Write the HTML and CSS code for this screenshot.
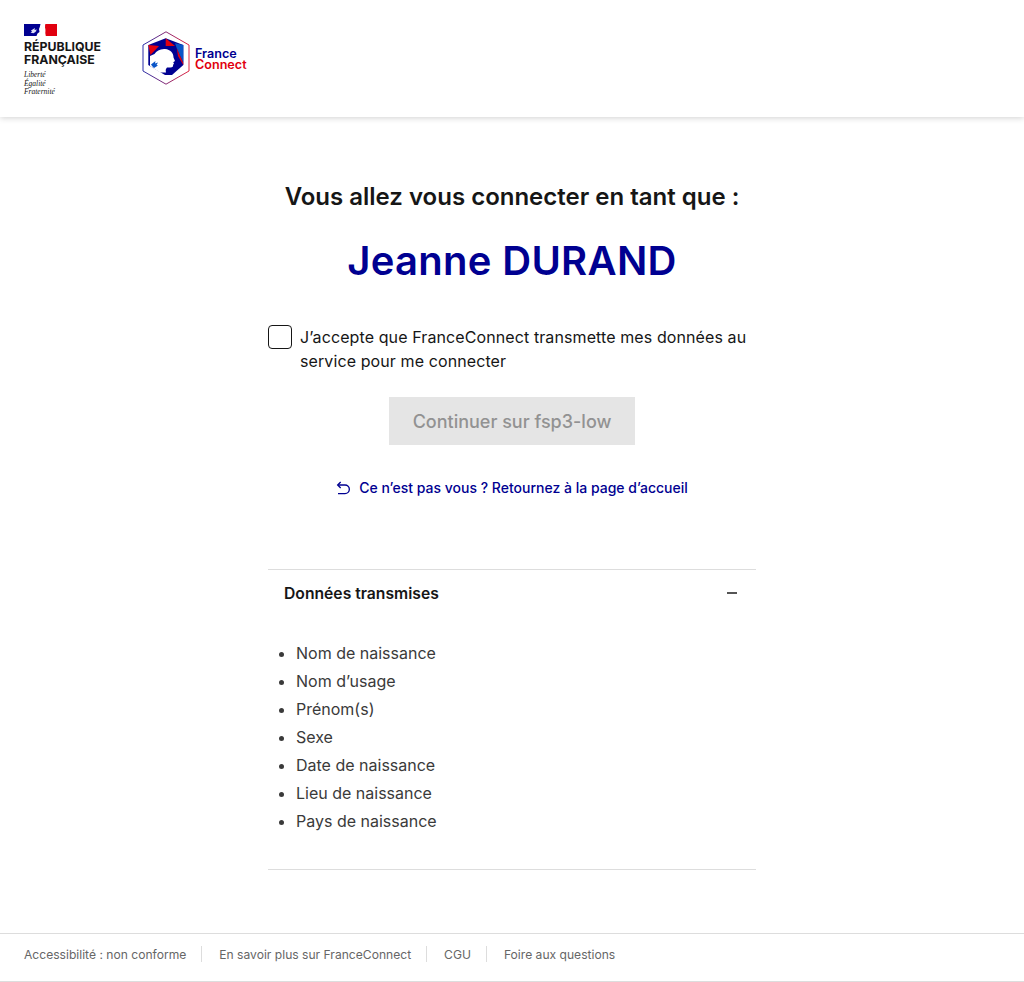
FILE: index.html
```html
<!DOCTYPE html>
<html lang="fr">
<head>
  <meta charset="UTF-8">
  <title>FranceConnect</title>
  <link rel="stylesheet" href="styles.css">
</head>
<body>

  <header class="site-header">
    <div class="rf-logo">
      <svg class="rf-flag" width="33" height="12" viewBox="0 0 33 12">
        <rect width="33" height="12" fill="#e1000f"/>
        <rect width="17" height="12" fill="#000091"/>
        <path d="M16.5 0H21.5C20.8 1 21.3 2 21 3.5C21.5 5 21.6 7 21.3 9L21.8 12H12.5L13.5 9.5L15.5 8L15 5L15.8 3z" fill="#fff"/>
        <path d="M7 6.5l4-2.5-.5 2 2.5-.5-1.500 2 1-.2-3 2-3-.5 1.500-1z" fill="#dfe1f5"/>
      </svg>
      <div class="rf-name">RÉPUBLIQUE<br>FRANÇAISE</div>
      <div class="rf-motto">Liberté<br>Égalité<br>Fraternité</div>
    </div>
    <div class="fc-logo">
      <svg width="48" height="54" viewBox="0 0 48 54">
        <defs>
          <linearGradient id="hexStroke" x1="0" y1="0" x2="1" y2="0">
            <stop offset="0" stop-color="#2a2fa8"/>
            <stop offset="1" stop-color="#e1233f"/>
          </linearGradient>
        </defs>
        <path d="M24 .8L47 14v26L24 53.2 1 40V14z" fill="#fff" stroke="url(#hexStroke)"/>
        <path d="M6.300 14L23.700 7.300 41.300 14V34L30 44H23L6.300 34z" fill="#000091"/>
        <path d="M6.300 14L17 15 8.500 24z" fill="#e1000f"/>
        <path d="M23.700 7.300L33 15H23.700z" fill="#e1000f"/>
        <path d="M33 12.300L41.300 14V32L34.700 17z" fill="#0a55c8"/>
        <path d="M34.700 17L41.300 32V34L36 25z" fill="#e1000f"/>
        <path d="M8 25V35L18 41.500H24C23.500 39.500 23.500 38 25 36.500H28.500C30.500 36.500 31.500 35.500 31 34L32 32.500 31.200 31.200 33 30 31.500 26.500C31.500 22 28.500 18.500 23 18C18 17.700 14.500 20 12.500 23z" fill="#fff"/>
        <path d="M9 33.500L13.500 30 13 32.500 16 31.500 14.500 34 16 34.500 12 37 10.500 35.500z" fill="#0a55c8"/>
      </svg>
      <div class="fc-name"><span class="fc-france">France</span><br><span class="fc-connect">Connect</span></div>
    </div>
  </header>

  <main class="content">
    <h1 class="intro">Vous allez vous connecter en tant que :</h1>
    <p class="identity">Jeanne DURAND</p>

    <label class="consent">
      <span class="checkbox"></span>
      <span>J’accepte que FranceConnect transmette mes données au service pour me connecter</span>
    </label>

    <button class="continue" disabled>Continuer sur fsp3-low</button>

    <a class="back-link" href="#">
      <svg width="16" height="16" viewBox="0 0 24 24" fill="none" stroke="#000091" stroke-width="2">
        <path d="M3 7.500h10.500a6.500 6.500 0 0 1 0 13H3"/>
        <path d="M7 3L2.500 7.500l4.500 4.500"/>
      </svg>
      Ce n’est pas vous ? Retournez à la page d’accueil
    </a>

    <section class="accordion">
      <div class="accordion-title">
        <span>Données transmises</span>
        <span class="minus"></span>
      </div>
      <ul class="data-list">
        <li>Nom de naissance</li>
        <li>Nom d’usage</li>
        <li>Prénom(s)</li>
        <li>Sexe</li>
        <li>Date de naissance</li>
        <li>Lieu de naissance</li>
        <li>Pays de naissance</li>
      </ul>
    </section>
  </main>

  <footer class="site-footer">
    <a href="#">Accessibilité : non conforme</a>
    <a href="#">En savoir plus sur FranceConnect</a>
    <a href="#">CGU</a>
    <a href="#">Foire aux questions</a>
  </footer>

</body>
</html>
```

FILE: styles.css
```css
body {
  margin: 0;
  font-family: Inter, "Liberation Sans", sans-serif;
  color: #161616;
  background-color: #fff;
}
.site-header {
  display: flex;
  align-items: flex-start;
  height: 117px;
  padding-left: 24px;
  box-shadow: 0 1px 6px rgba(0, 0, 0, 0.18);
  box-sizing: border-box;
}
.rf-logo {
  width: 118px;
  padding-top: 24px;
}
.rf-flag {
  display: block;
  margin-bottom: 4px;
}
.rf-name {
  font-size: 12.3px;
  line-height: 13px;
  font-weight: 700;
}
.rf-motto {
  margin-top: 5px;
  font-family: "Liberation Serif", serif;
  font-style: italic;
  font-size: 7.5px;
  line-height: 8.5px;
}
.fc-logo {
  display: flex;
  align-items: center;
  gap: 5px;
  margin-top: 31px;
}
.fc-name {
  padding-top: 2px;
  font-size: 12.6px;
  line-height: 11.5px;
  font-weight: 600;
}
.fc-france {
  color: #000091;
}
.fc-connect {
  color: #e1000f;
}
.content {
  width: 488px;
  margin: 0 auto;
  display: flex;
  flex-direction: column;
  align-items: center;
}
.intro {
  margin: 64px 0 0;
  font-size: 24px;
  line-height: 32px;
  font-weight: 600;
}
.identity {
  margin: 24px 0 0;
  font-size: 40px;
  line-height: 48px;
  font-weight: 600;
  letter-spacing: 0.3px;
  color: #000091;
}
.consent {
  display: flex;
  gap: 8px;
  align-self: stretch;
  margin-top: 40px;
  font-size: 16px;
  line-height: 24px;
  letter-spacing: 0.1px;
}
.checkbox {
  flex: none;
  width: 22px;
  height: 22px;
  border: 1px solid #161616;
  border-radius: 4px;
}
.continue {
  margin-top: 24px;
  width: 246px;
  height: 48px;
  border: none;
  background-color: #e5e5e5;
  color: #929292;
  font-family: inherit;
  font-size: 18px;
  font-weight: 500;
}
.back-link {
  display: flex;
  align-items: center;
  gap: 7px;
  margin-top: 31px;
  color: #000091;
  font-size: 14px;
  line-height: 24px;
  font-weight: 500;
  text-decoration: none;
}
.accordion {
  align-self: stretch;
  margin-top: 69px;
  border-top: 1px solid #ddd;
  border-bottom: 1px solid #ddd;
}
.accordion-title {
  display: flex;
  justify-content: space-between;
  align-items: center;
  height: 46px;
  padding: 0 19px 0 16px;
  font-size: 15.7px;
  font-weight: 600;
}
.minus {
  width: 10px;
  height: 2px;
  background-color: #555;
}
.data-list {
  margin: 0;
  padding: 23px 0 34px 28px;
  color: #3a3a3a;
  font-size: 16px;
  line-height: 28px;
}
.site-footer {
  display: flex;
  align-items: flex-start;
  margin-top: 63px;
  padding: 12px 0 19px 24px;
  border-top: 1px solid #ddd;
  border-bottom: 1px solid #ddd;
}
.site-footer a {
  padding: 2px 15px 0 0;
  margin-right: 17px;
  border-right: 1px solid #ddd;
  color: #666;
  font-size: 12.1px;
  line-height: 14px;
  text-decoration: none;
}
.site-footer a:last-child {
  border-right: none;
}
```
